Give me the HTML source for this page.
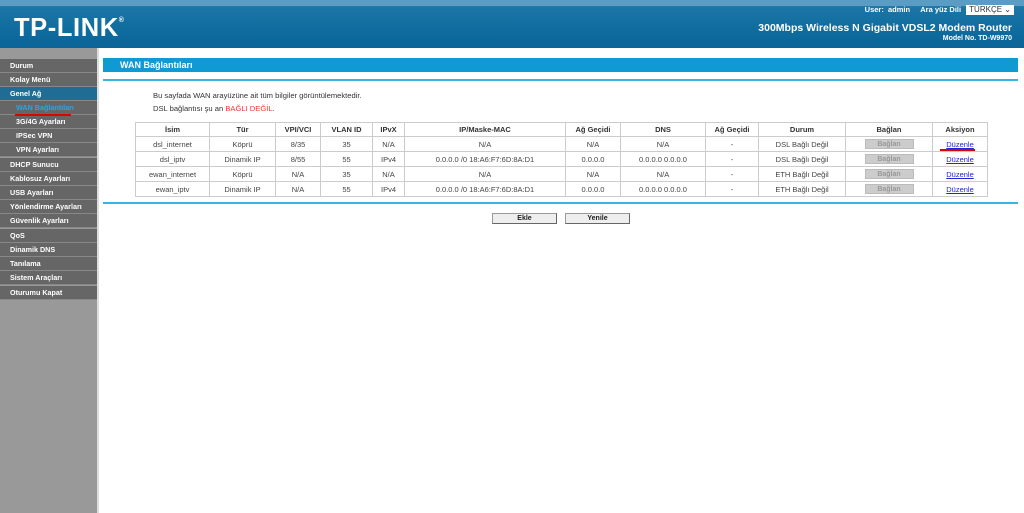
<!DOCTYPE html>
<html><head><meta charset="utf-8"><style>
*{margin:0;padding:0;box-sizing:border-box}
body{width:1024px;height:513px;overflow:hidden;background:#fff;font-family:"Liberation Sans",Arial,sans-serif;position:relative}
#hdr{position:absolute;left:0;top:0;width:1024px;height:48px;background:linear-gradient(180deg,#3d8db9 0,#1b76a6 8px,#0f6c9e 30px,#0b6597 48px)}
#hdr .top{position:absolute;left:0;top:0;width:1024px;height:6px;background:#5a9cc4}
#logo{position:absolute;left:14px;top:14px;color:#fff;font-weight:bold;font-size:25.5px;letter-spacing:0.6px;font-family:"Liberation Sans",sans-serif}
#logo sup{font-size:7px;vertical-align:top;position:relative;top:3px}
#user{position:absolute;right:10px;top:5px;color:#fff;font-size:7.5px;font-weight:bold}
#user span.sel{display:inline-block;background:#fff;color:#333;font-weight:normal;padding:0 3px;margin-left:3px;height:10px;line-height:10px;font-size:8px}
#title{position:absolute;right:12px;top:22px;color:#fff;font-weight:bold;font-size:10.5px}
#model{position:absolute;right:12px;top:35px;color:#fff;font-weight:bold;font-size:7px}
#side{position:absolute;left:0;top:48px;width:97px;height:465px;background:#999}
#side .it{position:absolute;left:0;width:97px;height:14px;background:#666;border-bottom:1px solid #888;color:#fff;font-weight:bold;font-size:7.2px;line-height:14px;padding-left:10px}
#side .it.sub{padding-left:16px}
#side .blue{background:#1f6d94}
#side .act{color:#29a6e6}
#vline{position:absolute;left:97px;top:48px;width:2px;height:465px;background:#ddd}
#tbar{position:absolute;left:103px;top:58px;width:915px;height:14px;background:#0f9ad4;color:#fff;font-weight:bold;font-size:9px;line-height:14px;padding-left:17px}
.hl{position:absolute;left:103px;width:915px;height:2px;background:#3cb4e2}
.txt{position:absolute;left:153px;font-size:7.6px;color:#333}
table{position:absolute;left:135px;top:122px;border-collapse:collapse;font-size:7.5px;color:#444}
td,th{border:1px solid #ccc;text-align:center;height:15px;padding:0}
th{font-weight:bold;color:#333;height:14px}
.bb{display:inline-block;width:49px;height:10px;background:#ccc;border:1px solid #bbb;color:#999;font-size:7px;line-height:9px;font-weight:bold;vertical-align:middle}
a{color:#22d;text-decoration:underline}
.btn{position:absolute;top:213px;width:65px;height:11px;background:#eee;border:1px solid #999;border-right-color:#666;border-bottom-color:#666;font-size:7px;font-weight:bold;text-align:center;line-height:10px;color:#222}
.red{position:absolute;height:2px;background:#d00}
</style></head><body>
<div id="hdr"><div class="top"></div>
<div id="logo">TP-LINK<sup>®</sup></div>
<div id="user">User:&nbsp; admin &nbsp;&nbsp;&nbsp; Ara yüz Dili <span class="sel">TÜRKÇE ⌄</span></div>
<div id="title">300Mbps Wireless N Gigabit VDSL2 Modem Router</div>
<div id="model">Model No. TD-W9970</div>
</div>
<div id="side">
<div class="it" style="top:11px">Durum</div>
<div class="it" style="top:25px">Kolay Menü</div>
<div class="it blue" style="top:39px">Genel Ağ</div>
<div class="it sub act" style="top:53px">WAN Bağlantıları</div>
<div class="it sub" style="top:67px">3G/4G Ayarları</div>
<div class="it sub" style="top:81px">IPSec VPN</div>
<div class="it sub" style="top:95px">VPN Ayarları</div>
<div class="it" style="top:110px">DHCP Sunucu</div>
<div class="it" style="top:124px">Kablosuz Ayarları</div>
<div class="it" style="top:138px">USB Ayarları</div>
<div class="it" style="top:152px">Yönlendirme Ayarları</div>
<div class="it" style="top:166px">Güvenlik Ayarları</div>
<div class="it" style="top:181px">QoS</div>
<div class="it" style="top:195px">Dinamik DNS</div>
<div class="it" style="top:209px">Tanılama</div>
<div class="it" style="top:223px">Sistem Araçları</div>
<div class="it" style="top:238px">Oturumu Kapat</div>
</div>
<div class="red" style="left:15px;top:114px;width:56px"></div>
<div id="vline"></div>
<div id="tbar">WAN Bağlantıları</div>
<div class="hl" style="top:79px"></div>
<div class="txt" style="top:91px">Bu sayfada WAN arayüzüne ait tüm bilgiler görüntülemektedir.</div>
<div class="txt" style="top:104px">DSL bağlantısı şu an <span style="color:#f33">BAĞLI DEĞİL</span>.</div>
<table>
<tr><th style="width:74px">İsim</th><th style="width:66px">Tür</th><th style="width:45px">VPI/VCI</th><th style="width:52px">VLAN ID</th><th style="width:32px">IPvX</th><th style="width:161px">IP/Maske-MAC</th><th style="width:55px">Ağ Geçidi</th><th style="width:85px">DNS</th><th style="width:53px">Ağ Geçidi</th><th style="width:87px">Durum</th><th style="width:87px">Bağlan</th><th style="width:55px">Aksiyon</th></tr>
<tr><td>dsl_internet</td><td>Köprü</td><td>8/35</td><td>35</td><td>N/A</td><td>N/A</td><td>N/A</td><td>N/A</td><td>-</td><td>DSL Bağlı Değil</td><td><span class="bb">Bağlan</span></td><td><a>Düzenle</a></td></tr>
<tr><td>dsl_iptv</td><td>Dinamik IP</td><td>8/55</td><td>55</td><td>IPv4</td><td>0.0.0.0 /0 18:A6:F7:6D:8A:D1</td><td>0.0.0.0</td><td>0.0.0.0 0.0.0.0</td><td>-</td><td>DSL Bağlı Değil</td><td><span class="bb">Bağlan</span></td><td><a>Düzenle</a></td></tr>
<tr><td>ewan_internet</td><td>Köprü</td><td>N/A</td><td>35</td><td>N/A</td><td>N/A</td><td>N/A</td><td>N/A</td><td>-</td><td>ETH Bağlı Değil</td><td><span class="bb">Bağlan</span></td><td><a>Düzenle</a></td></tr>
<tr><td>ewan_iptv</td><td>Dinamik IP</td><td>N/A</td><td>55</td><td>IPv4</td><td>0.0.0.0 /0 18:A6:F7:6D:8A:D1</td><td>0.0.0.0</td><td>0.0.0.0 0.0.0.0</td><td>-</td><td>ETH Bağlı Değil</td><td><span class="bb">Bağlan</span></td><td><a>Düzenle</a></td></tr>
</table>
<div class="red" style="left:940px;top:149px;width:35px"></div>
<div class="hl" style="top:202px"></div>
<div class="btn" style="left:492px">Ekle</div>
<div class="btn" style="left:565px">Yenile</div>
</body></html>
